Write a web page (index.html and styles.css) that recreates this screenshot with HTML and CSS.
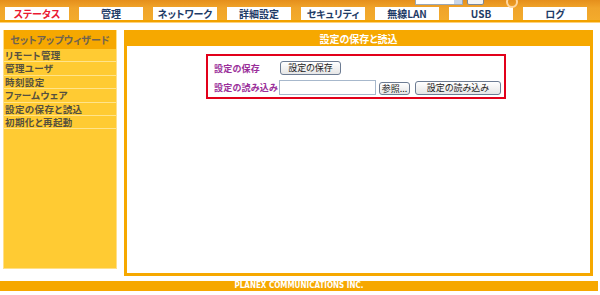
FILE: index.html
```html
<!DOCTYPE html>
<html lang="ja">
<head>
    <meta charset="UTF-8">
    <title>設定の保存と読込</title>
    <link rel="stylesheet" href="styles.css">
</head>
<body>

    <header class="top">
        <div class="top-tools">
            <span class="lang-select"><i></i></span>
            <span class="lang-btn"></span>
            <span class="ring"></span>
        </div>
        <nav class="tabs">
            <a class="tab active">ステータス</a>
            <a class="tab">管理</a>
            <a class="tab">ネットワーク</a>
            <a class="tab">詳細設定</a>
            <a class="tab">セキュリティ</a>
            <a class="tab">無線LAN</a>
            <a class="tab">USB</a>
            <a class="tab">ログ</a>
        </nav>
    </header>

    <div class="page">
        <aside class="side">
            <div class="side-title">セットアップウィザード</div>
            <a class="side-item">リモート管理</a>
            <a class="side-item">管理ユーザ</a>
            <a class="side-item">時刻設定</a>
            <a class="side-item">ファームウェア</a>
            <a class="side-item">設定の保存と読込</a>
            <a class="side-item">初期化と再起動</a>
        </aside>

        <main class="panel">
            <div class="panel-title">設定の保存と読込</div>
            <div class="panel-body">
                <div class="config-box">
                    <span class="label">設定の保存</span>
                    <div class="row">
                        <button class="btn btn-save">設定の保存</button>
                    </div>
                    <span class="label">設定の読み込み</span>
                    <div class="row">
                        <input type="text" class="file-input">
                        <button class="btn btn-browse">参照...</button>
                        <button class="btn btn-load">設定の読み込み</button>
                    </div>
                </div>
            </div>
        </main>
    </div>

    <footer class="footer">PLANEX COMMUNICATIONS INC.</footer>

</body>
</html>
```

FILE: styles.css
```css
body {
    margin: 0;
    padding: 0;
    background-color: #ffffff;
    font-family: "Noto Sans CJK JP", "DejaVu Sans", sans-serif;
    font-feature-settings: "palt";
    width: 600px;
    height: 295px;
    overflow: hidden;
}
.top {
    position: relative;
    height: 20px;
    background: linear-gradient(#e58f1c, #f0a42a 40%, #f3ab2c);
    border-bottom: 2px solid #f2a200;
    box-shadow: 0 1px 0 #ffd27a;
}
.top-tools {
    position: absolute;
    top: -4px;
    left: 415px;
    display: flex;
    align-items: flex-start;
    gap: 4px;
}
.lang-select {
    position: relative;
    width: 46px;
    height: 7px;
    background: #ffffff;
    border: 1px solid #9aa7b5;
}
.lang-select i {
    position: absolute;
    right: 0;
    top: 0;
    width: 8px;
    height: 7px;
    background: #c8d6ea;
}
.lang-btn {
    width: 15px;
    height: 7px;
    background: #f4f4f4;
    border: 1px solid #7d8896;
    border-radius: 2px;
}
.ring {
    width: 8px;
    height: 8px;
    margin-left: 18px;
    border: 2px solid #ffd7a0;
    border-radius: 50%;
}
.tabs {
    display: flex;
    gap: 10px;
    padding: 7px 0 0 5px;
}
.tab {
    width: 64px;
    height: 13px;
    background: #ffffff;
    color: #1e3b66;
    font-size: 10px;
    font-weight: bold;
    line-height: 13px;
    text-align: center;
}
.tab.active {
    color: #ea1a32;
}
.page {
    display: flex;
    gap: 7px;
    padding: 8px 0 0 3px;
    align-items: flex-start;
}
.side {
    display: flex;
    flex-direction: column;
    width: 114px;
    height: 239px;
    box-sizing: border-box;
    background: #ffcb33;
    border: 1px solid #ffe08a;
    border-top: none;
}
.side-title {
    height: 19px;
    line-height: 19px;
    background: #f6a800;
    color: #6f6350;
    font-size: 10px;
    font-weight: bold;
    text-align: center;
}
.side-item {
    display: block;
    height: 12.4px;
    line-height: 12.4px;
    overflow: hidden;
    border-bottom: 1px solid #ffe48c;
    color: #55503f;
    font-size: 9.5px;
    font-weight: bold;
    padding-left: 1px;
    letter-spacing: 0.4px;
}
.panel {
    width: 469px;
    height: 246px;
    box-sizing: border-box;
    border: 3px solid #f6a800;
    background: #ffffff;
}
.panel-title {
    height: 13px;
    line-height: 11px;
    background: #f6a800;
    color: #ffffff;
    font-size: 10px;
    font-weight: bold;
    text-align: center;
}
.panel-body {
    padding-top: 8px;
}
.config-box {
    display: grid;
    grid-template-columns: 66px auto;
    row-gap: 5px;
    align-items: center;
    width: 300px;
    box-sizing: border-box;
    margin: 0 0 0 79px;
    padding: 5px 0 2px 6px;
    border: 2px solid #e2001a;
}
.label {
    color: #9a2f9a;
    font-size: 9px;
    font-weight: bold;
    letter-spacing: 0.2px;
    white-space: nowrap;
}
.row {
    display: flex;
    align-items: center;
}
.btn {
    height: 14px;
    padding: 0;
    background: linear-gradient(#ffffff, #e6e6e6);
    border: 1px solid #6d7c93;
    border-radius: 3px;
    color: #222222;
    font-family: "Noto Sans CJK JP", sans-serif;
    font-feature-settings: "palt";
    font-size: 9px;
    line-height: 12px;
}
.btn-save {
    width: 61px;
}
.file-input {
    width: 97px;
    height: 15px;
    box-sizing: border-box;
    margin: 0 0 0 -1px;
    padding: 0;
    border: 1px solid #a7b8cc;
}
.btn-browse {
    width: 31px;
    height: 13px;
    margin-left: 3px;
    margin-top: 1px;
}
.btn-load {
    width: 86px;
    margin-left: 5px;
}
.footer {
    width: 598px;
    height: 10px;
    margin-top: 5px;
    background: #f6a800;
    color: #ffffff;
    font-family: "DejaVu Sans Condensed", "DejaVu Sans", sans-serif;
    font-size: 8px;
    font-weight: bold;
    line-height: 10px;
    text-align: center;
}
```
